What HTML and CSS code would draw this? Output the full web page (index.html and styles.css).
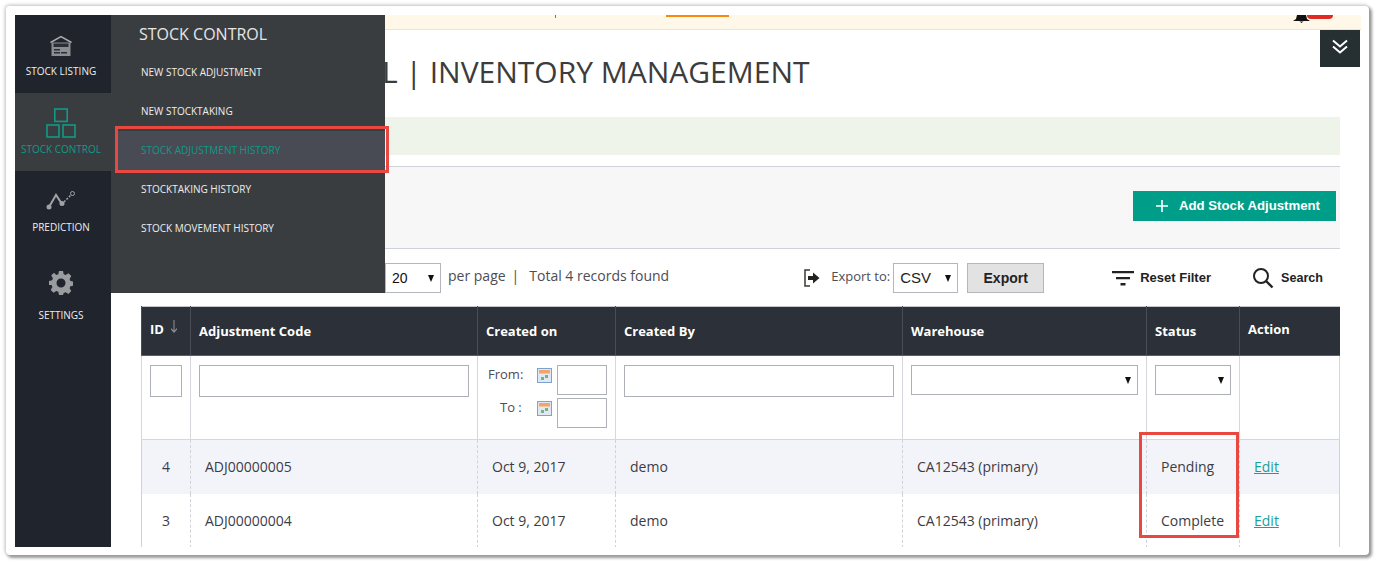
FILE: index.html
```html
<!DOCTYPE html>
<html lang="en">
<head>
<meta charset="utf-8">
<title>Inventory Management</title>
<link rel="stylesheet" href="styles.css">
</head>
<body>
<div class="frame">
  <div class="app">
    <nav class="rail">
      <a class="rail-item">
        <svg class="rail-icon" width="24" height="22" viewBox="0 0 24 22"><path d="M1.500 7.500 12 1.500 22.500 7.500" fill="none" stroke="#a9abae" stroke-width="1.500"/><path d="M2.500 7.500h19V21h-19z" fill="#8b8e92"/><path d="M4.500 8.500h15V12h-15z" fill="#2a2e35"/><path d="M5 14h6v1.500H5zM5 17h6v1.500H5zM12 17h6v1.500h-6z" fill="#2a2e35"/></svg>
        <span>STOCK LISTING</span>
      </a>
      <a class="rail-item active">
        <svg class="rail-icon" width="30" height="30" viewBox="0 0 30 30"><g fill="none" stroke="#0f9a85" stroke-width="1.600"><rect x="8.800" y="1" width="12.400" height="12.400"/><rect x="1" y="17" width="12" height="12"/><rect x="17" y="17" width="12" height="12"/></g></svg>
        <span>STOCK CONTROL</span>
      </a>
      <a class="rail-item">
        <svg class="rail-icon" width="30" height="22" viewBox="0 0 30 22"><g fill="none" stroke="#a0a2a6"><path d="M3 18 10 6l6 9" stroke-width="2"/><path d="M18 13l7-7" stroke-width="1.500" stroke-dasharray="2 1.500"/><circle cx="26.500" cy="4.500" r="2"/></g><g fill="#a0a2a6"><circle cx="3" cy="18" r="2.500"/><circle cx="16" cy="14.500" r="2.500"/></g></svg>
        <span>PREDICTION</span>
      </a>
      <a class="rail-item">
        <svg class="rail-icon" width="24" height="24" viewBox="0 0 24 24"><path fill="#9a9c9f" fill-rule="evenodd" d="M10 0h4l.7 3.200 2 .8L19.500 2.300l2.800 2.800-1.700 2.800.8 2 3.100.7v4l-3.100.7-.8 2 1.700 2.800-2.800 2.800-2.800-1.700-2 .8L14 24h-4l-.7-3.200-2-.8-2.800 1.700-2.800-2.800 1.700-2.800-.8-2L0 14v-4l3.100-.7.800-2-1.700-2.800 2.800-2.800L7.300 4l2-.8zM12 7.500a4.500 4.500 0 1 0 0 9 4.500 4.500 0 0 0 0-9z"/></svg>
        <span>SETTINGS</span>
      </a>
    </nav>

    <main class="main">
      <div class="notice">
        <span class="tick"></span>
        <span class="orange"></span>
        <span class="bell-wrap">
          <svg width="18" height="8" viewBox="0 0 18 8"><path d="M4 0h9l1 4 3 2H0l3-2z" fill="#111"/><path d="M6.500 6.500h4L8.500 8z" fill="#111"/></svg>
          <span class="badge"></span>
        </span>
      </div>
      <div class="content">
        <h1 class="title">L | INVENTORY MANAGEMENT</h1>
        <div class="greenbar"></div>
        <div class="panel">
          <button class="add-btn"><svg width="14" height="14" viewBox="0 0 14 14"><path d="M6.200 1h1.600v12H6.200zM1 6.200h12v1.600H1z" fill="#fff"/></svg>Add Stock Adjustment</button>
        </div>
        <div class="toolbar">
          <div class="pager">
            <span class="select sel-page">20<i class="caret"></i></span>
            <span class="pager-text">per page</span><span class="sep pager-text">|</span><span class="pager-text">Total 4 records found</span>
          </div>
          <div class="export">
            <svg class="export-icon" width="16" height="18" viewBox="0 0 16 18"><path d="M6 1H1v16h5" fill="none" stroke="#3a3a34" stroke-width="1.500"/><path d="M4 7h5V3.500L15.500 9 9 14.500V11H4z" fill="#222"/></svg>
            <span class="export-label">Export to:</span>
            <span class="select sel-csv">CSV<i class="caret"></i></span>
            <button class="export-btn">Export</button>
          </div>
          <a class="tool reset"><svg width="22" height="16" viewBox="0 0 22 16"><path d="M0 1h22v2.200H0zM4 7h14v2.200H4zM8.500 13h5v2.500h-5z" fill="#222"/></svg>Reset Filter</a>
          <a class="tool search"><svg width="22" height="22" viewBox="0 0 22 22"><circle cx="9" cy="9" r="7" fill="none" stroke="#222" stroke-width="2"/><path d="M14 14l6.500 6.500" stroke="#222" stroke-width="2.400"/></svg>Search</a>
        </div>
        <table class="grid">
          <colgroup>
            <col class="c-id"><col class="c-code"><col class="c-date"><col class="c-by"><col class="c-wh"><col class="c-st"><col class="c-act">
          </colgroup>
          <thead>
            <tr class="head">
              <th class="th-id">ID <svg class="sort" width="8" height="14" viewBox="0 0 8 14"><path d="M3.500 0h1v10.500L7 8v1.500L4 13 1 9.500V8l2.500 2.500z" fill="#8d929b"/></svg></th>
              <th>Adjustment Code</th><th>Created on</th><th>Created By</th><th>Warehouse</th><th>Status</th><th class="th-act">Action</th>
            </tr>
            <tr class="filters">
              <td><span class="field f-id"></span></td>
              <td><span class="field f-code"></span></td>
              <td class="dates">
                <div class="date-row"><span class="date-label">From:</span><svg class="cal" width="15" height="15" viewBox="0 0 15 15"><rect x=".5" y=".5" width="14" height="14" fill="#dfe8f3" stroke="#7ba3d2"/><rect x="2" y="2" width="11" height="3.500" fill="#f5a464"/><rect x="4" y="9" width="3" height="3" fill="#79b37a"/><rect x="8" y="7" width="3" height="3" fill="#79b37a"/></svg><span class="field f-date"></span></div>
                <div class="date-row"><span class="date-label to">To :</span><svg class="cal" width="15" height="15" viewBox="0 0 15 15"><rect x=".5" y=".5" width="14" height="14" fill="#dfe8f3" stroke="#7ba3d2"/><rect x="2" y="2" width="11" height="3.500" fill="#f5a464"/><rect x="4" y="9" width="3" height="3" fill="#79b37a"/><rect x="8" y="7" width="3" height="3" fill="#79b37a"/></svg><span class="field f-date"></span></div>
              </td>
              <td><span class="field f-by"></span></td>
              <td><span class="field f-wh"><i class="caret"></i></span></td>
              <td><span class="field f-st"><i class="caret"></i></span></td>
              <td></td>
            </tr>
          </thead>
          <tbody>
            <tr class="row alt"><td class="num">4</td><td>ADJ00000005</td><td>Oct 9, 2017</td><td>demo</td><td>CA12543 (primary)</td><td>Pending</td><td><a class="edit">Edit</a></td></tr>
            <tr class="row"><td class="num">3</td><td>ADJ00000004</td><td>Oct 9, 2017</td><td>demo</td><td>CA12543 (primary)</td><td>Complete</td><td><a class="edit">Edit</a></td></tr>
          </tbody>
        </table>
      </div>
    </main>

    <aside class="flyout">
      <h2 class="fly-title">STOCK CONTROL</h2>
      <a class="fly-item">NEW STOCK ADJUSTMENT</a>
      <a class="fly-item">NEW STOCKTAKING</a>
      <a class="fly-item current">STOCK ADJUSTMENT HISTORY</a>
      <a class="fly-item">STOCKTAKING HISTORY</a>
      <a class="fly-item">STOCK MOVEMENT HISTORY</a>
    </aside>

    <button class="collapse"><svg width="16" height="15" viewBox="0 0 16 15"><path d="M1 1.500l7 6 7-6M1 7.500l7 6 7-6" fill="none" stroke="#fff" stroke-width="2"/></svg></button>
    <div class="mark mark-menu"></div>
    <div class="mark mark-status"></div>
  </div>
</div>
</body>
</html>
```
FILE: styles.css
```css
* { box-sizing: border-box; }
html, body { margin: 0; height: 100%; background: #fff; overflow: hidden; }
body { font-family: "Open Sans", sans-serif; color: #3c3c3c; }

.frame {
  position: relative;
  width: 1363px;
  height: 549px;
  margin: 6px 0 0 6px;
  padding: 9px 8px 8px 9px;
  background: #fff;
  border-radius: 4px;
  box-shadow: 2px 2px 3px 1px #9a9a9a, -1px -1px 3px 1px #dcdcdc;
}
.app {
  position: relative;
  display: flex;
  width: 1346px;
  height: 532px;
  overflow: hidden;
}

/* rail */
.rail { flex: 0 0 96px; background: #20242c; }
.rail-item {
  display: flex;
  flex-direction: column;
  align-items: center;
  height: 78px;
  padding-right: 4px;
  font-size: 10px;
  line-height: 14px;
  color: #eceef0;
  position: relative;
}
.rail-item span { position: absolute; top: 49px; white-space: nowrap; }
.rail-icon { position: absolute; top: 20px; }
.rail-item:nth-child(2) { height: 78px; background: #3a3d40; color: #0f9a85; }
.rail-item:nth-child(2) .rail-icon { top: 15px; }
.rail-item:nth-child(3) .rail-icon { top: 18px; }
.rail-item:nth-child(3) span { top: 49px; }
.rail-item:nth-child(4) { height: 88px; }
.rail-item:nth-child(4) .rail-icon { top: 22px; }
.rail-item:nth-child(4) span { top: 59px; }

/* main column */
.main { flex: 1; min-width: 0; }
.notice {
  position: relative;
  height: 15px;
  background: #fff8e8;
  border-bottom: 1px solid #eee4cc;
}
.tick { position: absolute; left: 444px; top: 0; width: 1px; height: 3px; background: #777; }
.orange { position: absolute; left: 555px; top: 0; width: 63px; height: 2px; background: #f58a12; }
.bell-wrap { position: absolute; left: 1182px; top: 0; display: flex; height: 8px; }
.badge {
  display: block;
  width: 26px;
  height: 4px;
  margin-left: -4px;
  background: #df2a26;
  border-radius: 0 0 12px 12px;
}
.content { padding: 0 21px 0 30px; }

.title {
  margin: 0;
  height: 87px;
  padding: 22px 0 0 241px;
  font-size: 30px;
  line-height: 40px;
  font-weight: 400;
  color: #3c3c3c;
  white-space: nowrap;
}
.greenbar { height: 38px; background: #eff4ea; }
.panel {
  display: flex;
  justify-content: flex-end;
  align-items: flex-start;
  height: 83px;
  margin-top: 11px;
  padding: 24px 4px 0 0;
  background: #f7f7f7;
  border-top: 1px solid #cfd2d8;
  border-bottom: 1px solid #cfd2d8;
}
.add-btn {
  display: flex;
  align-items: center;
  gap: 10px;
  width: 203px;
  height: 30px;
  padding: 0 0 2px 22px;
  border: 0;
  background: #009e88;
  color: #fff;
  font: bold 13.200px "Liberation Sans", sans-serif;
}
.add-btn svg { margin-top: 2px; }

/* toolbar */
.toolbar { position: relative; display: flex; align-items: center; height: 57px; }
.pager {
  display: flex;
  align-items: center;
  margin-left: 244px;
  font-size: 14px;
  color: #4d4d55;
}
.pager-text { margin-bottom: 4px; }
.select {
  position: relative;
  display: block;
  background: #fff;
  border: 1px solid #b3b6bb;
  font: 14px/28px "Liberation Sans", sans-serif;
  color: #111;
}
.sel-page { width: 56px; height: 30px; padding-left: 6px; margin-right: 7px; }
.pager-text.sep { margin: 0 10px 4px 6px; }
.caret {
  position: absolute;
  right: 6px;
  top: 11px;
  width: 0;
  height: 0;
  border-left: 3.500px solid transparent;
  border-right: 3.500px solid transparent;
  border-top: 7px solid #111;
}
.export { display: flex; align-items: center; margin-left: 135px; }
.export-icon { margin-right: 11px; }
.export-label { font-size: 13px; color: #4d4d55; margin: 0 3px 4px 0; }
.sel-csv { width: 65px; height: 30px; padding-left: 6px; color: #222; font-size: 15px; }
.export-btn {
  width: 77px;
  height: 30px;
  margin-left: 9px;
  background: #e2e2e2;
  border: 1px solid #b3b6bb;
  font: bold 14px "Liberation Sans", sans-serif;
  color: #222;
}
.tool {
  display: flex;
  align-items: center;
  font: bold 13px "Liberation Sans", sans-serif;
  color: #222;
}
.reset { gap: 6px; margin-left: 68px; }
.search { gap: 7px; margin-left: 41px; font-size: 12.600px; }

/* table */
.grid {
  width: 1198px;
  table-layout: fixed;
  border-collapse: collapse;
  border-top: 1px solid #c2c5cb;
  font-size: 14px;
}
.c-id { width: 49px; }
.c-code { width: 287px; }
.c-date { width: 138px; }
.c-by { width: 287px; }
.c-wh { width: 244px; }
.c-st { width: 93px; }
.c-act { width: 100px; }
.head { height: 49px; background: #2c3038; }
.head th {
  padding: 0 0 0 8px;
  text-align: left;
  font-size: 13px;
  font-weight: 700;
  color: #fff;
  border-left: 1px solid #484c55;
  border-bottom: 1px solid #5a5e66;
}
.head .th-id { padding-bottom: 5px; }
.head .th-act { padding-bottom: 4px; }
.sort { margin-left: 3px; }
.filters { height: 84px; }
.filters td {
  vertical-align: top;
  padding: 9px 8px 0;
  border: 1px solid #d5d7dc;
}
.field { display: block; position: relative; background: #fff; border: 1px solid #adb0b6; }
.f-id { width: 32px; height: 32px; }
.f-code, .f-by { width: 100%; height: 32px; }
.f-wh, .f-st { width: 100%; height: 30px; }
.f-wh .caret, .f-st .caret { top: 11px; }
.filters .dates { padding: 9px 8px 0 10px; }
.date-row { display: flex; align-items: flex-start; height: 33px; }
.date-label { width: 40px; font-size: 13px; line-height: 18px; color: #4d4d55; }
.date-label.to { padding-left: 12px; line-height: 18px; }
.cal { margin: 3px 5px 0 9px; flex: none; }
.f-date { width: 50px; height: 30px; }
.row { height: 54px; }
.row td {
  padding: 0 8px 0 14px;
  color: #3c3c44;
  border-left: 1px dashed #cfd2d8;
  white-space: nowrap;
}
.row td:first-child { border-left: 1px solid #cfd2d8; }
.row td:last-child { border-right: 1px solid #cfd2d8; }
.row.alt { background: #f3f4f9; }
.row .num { padding: 0; text-align: center; }
.edit { color: #1a9f9a; text-decoration: underline; }

/* overlays */
.flyout {
  position: absolute;
  left: 96px;
  top: 0;
  width: 274px;
  height: 278px;
  background: #3a3d40;
  color: #eee;
}
.fly-title {
  margin: 0;
  height: 38px;
  padding-left: 28px;
  font-size: 16px;
  line-height: 38px;
  font-weight: 400;
  color: #e6e6e6;
}
.fly-item {
  display: block;
  height: 39px;
  padding-left: 30px;
  font-size: 10px;
  line-height: 39px;
  color: #eeeeee;
}
.fly-item.current { background: #484b54; color: #0f9a85; margin-left: 4px; padding-left: 26px; }
.collapse {
  position: absolute;
  right: 1px;
  top: 15px;
  display: flex;
  align-items: center;
  justify-content: center;
  width: 40px;
  height: 37px;
  padding: 0 0 4px;
  border: 0;
  background: #263033;
}
.mark { position: absolute; border: 3px solid #e8483f; }
.mark-menu { left: 100px; top: 111px; width: 274px; height: 47px; }
.mark-status { left: 1124px; top: 417px; width: 100px; height: 106px; }
```
